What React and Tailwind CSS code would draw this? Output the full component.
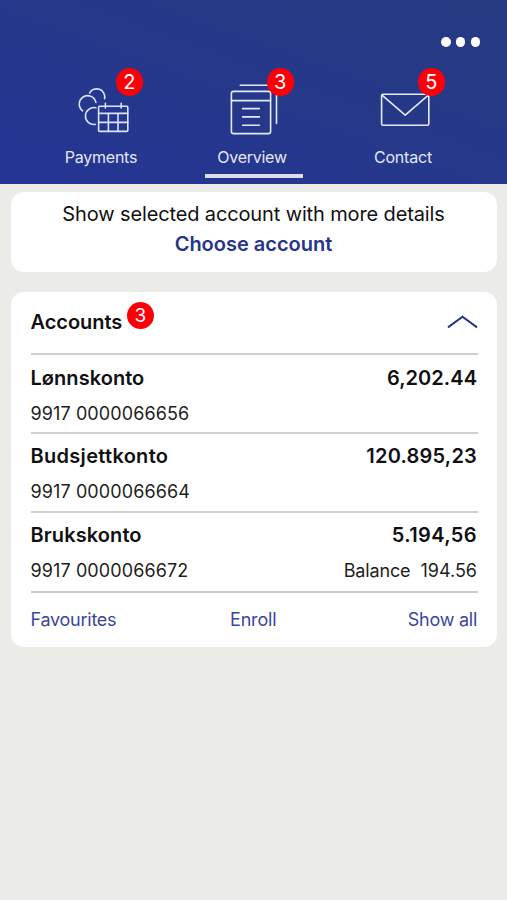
const accounts = [
  { name: 'Lønnskonto', number: '9917 0000066656', amount: '6,202.44', nameTrack: 'tracking-[0.05px]', amountTrack: 'tracking-[0.05px]' },
  { name: 'Budsjettkonto', number: '9917 0000066664', amount: '120.895,23', nameTrack: 'tracking-[0.3px]', amountTrack: 'tracking-[0.2px]' },
  { name: 'Brukskonto', number: '9917 0000066672', amount: '5.194,56', balance: '194.56', nameTrack: 'tracking-[0.1px]', amountTrack: 'tracking-[0.4px]' },
];

function PaymentsIcon() {
  return (
    <svg className="block h-[72px] w-[100px]" viewBox="51 70 100 72" fill="none" stroke="#dfe3fa" strokeWidth="1.6" strokeLinecap="round">
      <path d="M89.6 93A8.1 8.1 0 0 1 104.6 98.6" />
      <path d="M82.6 110.8A8.4 8.4 0 1 1 95.9 102.4" />
      <path d="M95.8 107.7A8.5 8.5 0 1 0 95.2 124.4" />
      <rect x="98.6" y="106.2" width="29.2" height="25.2" rx="1" />
      <path d="M98.6 113.4H127.8M98.6 122.4H127.8M108.4 113.4V131.4M118 113.4V131.4M105.4 103.4V108M121.2 103.4V108" />
    </svg>
  );
}

function OverviewIcon() {
  return (
    <svg className="block h-[72px] w-[100px]" viewBox="202 70 100 72" fill="none" stroke="#e6e9fb" strokeWidth="1.6" strokeLinecap="round">
      <rect x="231.4" y="91.4" width="39.2" height="42.2" rx="2.2" />
      <path d="M231.4 100.6H270.6M242.6 108.6H259.4M242.6 116.9H259.4M242.6 125.2H259.4M240.2 85.2H270M276.5 92V123.5" />
    </svg>
  );
}

function ContactIcon() {
  return (
    <svg className="block h-[72px] w-[100px]" viewBox="353 70 100 72" fill="none" stroke="#e6e9fb" strokeWidth="1.6" strokeLinejoin="round">
      <rect x="381.6" y="94.2" width="47.2" height="31" rx="1.4" />
      <path d="M382 95.2L405.2 115.2L428.4 95.2" />
    </svg>
  );
}

function Tab({ icon, label, count, active, track }) {
  return (
    <div className="flex w-[151px] flex-col items-center">
      <div className="relative">
        {icon}
        <span className="absolute -top-[2px] left-[64.5px] flex size-[27.5px] items-center justify-center rounded-full bg-[#fd0007] text-[20px] leading-none text-white">
          {count}
        </span>
      </div>
      <span className={'mt-[5px] text-[16px] leading-[20px] text-[#e4e7f8] ' + track}>{label}</span>
      {active && <span className="mt-[7px] ml-[4px] h-1 w-[98px] bg-[#dcdcea]" />}
    </div>
  );
}

export default function App() {
  return (
    <div className="h-[900px] w-[507px] overflow-hidden bg-[#ebece8] font-['Inter','Liberation_Sans',sans-serif] text-[#111113]">
      <header className="h-[184px] bg-linear-to-tr from-[#243594] via-[#25388a] to-[#273b82]">
        <div className="flex h-[70px] justify-end gap-[5.25px] pt-[37px] pr-[27px]">
          <span className="size-[9.5px] rounded-full bg-white" />
          <span className="size-[9.5px] rounded-full bg-white" />
          <span className="size-[9.5px] rounded-full bg-white" />
        </div>
        <nav className="flex pl-[25.5px]">
          <Tab icon={<PaymentsIcon />} label="Payments" count={2} track="tracking-[-0.25px]" />
          <Tab icon={<OverviewIcon />} label="Overview" count={3} active track="tracking-[-0.25px]" />
          <Tab icon={<ContactIcon />} label="Contact" count={5} track="tracking-[-0.2px]" />
        </nav>
      </header>

      <main className="flex flex-col gap-5 px-[10.5px] pt-2">
        <section className="flex h-20 flex-col items-center rounded-[13px] bg-white pt-[7px]">
          <p className="text-[20px] leading-[30px] tracking-[-0.13px]">Show selected account with more details</p>
          <button className="text-[20px] leading-[30px] font-semibold tracking-[0px] text-[#26348b]">Choose account</button>
        </section>

        <section className="h-[355px] rounded-[13px] bg-white pr-[18.5px] pl-5">
          <div className="flex h-[61px] items-start justify-between">
            <div className="flex items-start">
              <h2 className="pt-[15px] text-[20px] leading-[30px] font-semibold tracking-[-0.05px]">Accounts</h2>
              <span className="mt-[10px] ml-[5px] flex size-[26.5px] items-center justify-center rounded-full bg-[#fd0007] text-[19px] leading-none text-white">3</span>
            </div>
            <svg className="mt-[21px] h-[18px] w-[31px]" viewBox="0 0 31 18" fill="none" stroke="#27348b" strokeWidth="2">
              <path d="M1 14.4L15.5 3.8L30 14.4" />
            </svg>
          </div>
          {accounts.map((a) => (
            <div key={a.number} className="h-[78.75px] border-t-2 border-[#d0d0d0] pt-[7.5px] pr-px">
              <div className="flex justify-between text-[20px] leading-[30px] font-semibold">
                <span className={a.nameTrack}>{a.name}</span>
                <span className={a.amountTrack}>{a.amount}</span>
              </div>
              <div className="mt-[7px] flex justify-between text-[18px] leading-[28px] text-[#1e1e20]">
                <span className="tracking-[0.1px]">{a.number}</span>
                {a.balance && (
                  <span className="flex gap-[10px]">
                    <span className="tracking-[-0.15px]">Balance</span>
                    <span>{a.balance}</span>
                  </span>
                )}
              </div>
            </div>
          ))}
          <div className="mt-[2px] flex justify-between border-t-2 border-[#cbcbcb] pt-[13px] pr-px text-[18px] leading-[28px] text-[#3a479c]">
            <span className="w-[148px] tracking-[-0.25px]">Favourites</span>
            <span className="w-[149px] text-center tracking-[-0.15px]">Enroll</span>
            <span className="w-[149px] text-right tracking-[-0.25px]">Show all</span>
          </div>
        </section>
      </main>
    </div>
  );
}
